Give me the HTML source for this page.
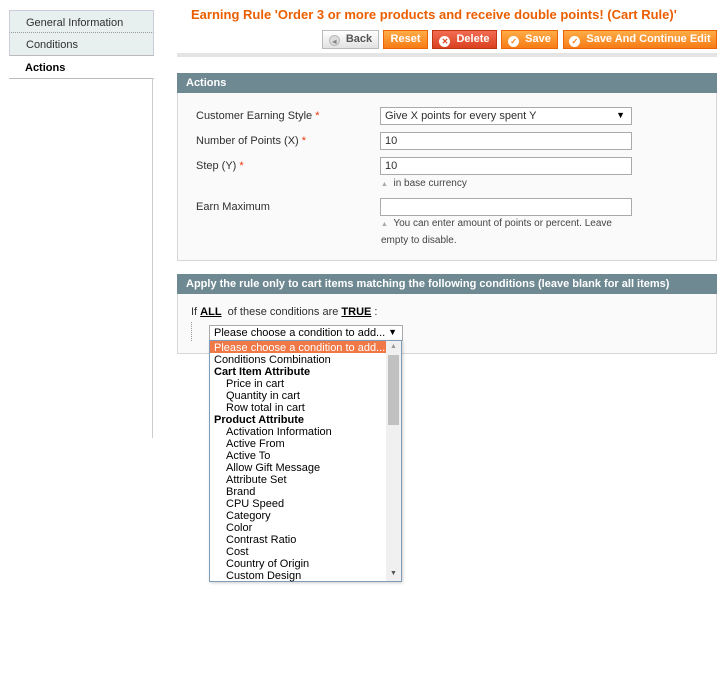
<!DOCTYPE html>
<html><head><style>
*{margin:0;padding:0;box-sizing:border-box}
body{width:725px;height:680px;background:#fff;font-family:"Liberation Sans",Arial,sans-serif;font-size:11px;color:#2f2f2f;position:relative;overflow:hidden}
.a{position:absolute}
.tab{position:absolute;left:9px;width:145px;height:23px;padding:6px 0 0 16px;font-size:11px}
.btn{position:absolute;top:30px;height:19px;border:1px solid #ed6502;background:linear-gradient(#ffac47,#f77c16);color:#fff;font-weight:bold;font-size:11px;line-height:17px;padding:0;white-space:nowrap;text-align:center;overflow:hidden}
.ic{display:inline-block;width:11px;height:11px;border-radius:50%;background:#fff;vertical-align:-2px;margin-right:6px;color:#f77c16;font-size:8px;line-height:11px;text-align:center}
.hd{position:absolute;left:177px;width:540px;height:20px;background:#6f8992;color:#fff;font-weight:bold;font-size:11px;padding:4px 0 0 9px}
.box{position:absolute;left:177px;width:540px;background:#fafafa;border:1px solid #d6d6d6;border-top:0}
.lbl{position:absolute;left:196px}
.req{color:#eb340a}
.inp{position:absolute;left:380px;width:252px;height:18px;border:1px solid #aaa;background:#fff;padding:2px 4px}
.note{position:absolute;left:381px;font-size:10px;color:#444;line-height:16px}
.li{position:absolute;left:214px;line-height:12px;white-space:nowrap}
</style></head><body>
<div class="tab" style="top:10px;background:#e7efef;border:1px solid #ccd;border-bottom:1px dotted #999">General Information</div>
<div class="tab" style="top:33px;background:#e7efef;border-left:1px solid #ccd;border-right:1px solid #ccd;border-bottom:1px solid #bbb">Conditions</div>
<div class="tab" style="top:56px;font-weight:bold;color:#000;border-bottom:1px solid #bbb;background:#fff">Actions</div>
<div class="a" style="left:152px;top:78px;width:1px;height:360px;background:#ccc"></div>

<div class="a" style="left:191px;top:7px;color:#eb5e00;font-weight:bold;font-size:13px">Earning Rule 'Order 3 or more products and receive double points! (Cart Rule)'</div>
<div class="btn" style="left:322px;width:57px;background:linear-gradient(#fff,#e2e2e2);border-color:#bbb;color:#555"><span class="ic" style="background:#ddd;color:#888;border:1px solid #bbb">◂</span>Back</div>
<div class="btn" style="left:383px;width:45px">Reset</div>
<div class="btn" style="left:432px;width:65px;background:linear-gradient(#f26c52,#d9411f);border-color:#bf3512"><span class="ic" style="color:#d9411f">✕</span>Delete</div>
<div class="btn" style="left:501px;width:57px"><span class="ic">✓</span>Save</div>
<div class="btn" style="left:563px;width:154px"><span class="ic">✓</span>Save And Continue Edit</div>
<div class="a" style="left:177px;top:53px;width:540px;height:4px;background:#e4e4e4"></div>

<div class="hd" style="top:73px">Actions</div>
<div class="box" style="top:93px;height:168px"></div>
<div class="lbl" style="top:110px">Customer Earning Style <span class="req">*</span></div>
<div class="inp" style="top:107px;height:18px;padding-left:4px">Give X points for every spent Y<span style="position:absolute;right:6px;font-size:9px;color:#000">▼</span></div>
<div class="lbl" style="top:135px">Number of Points (X) <span class="req">*</span></div>
<div class="inp" style="top:132px">10</div>
<div class="lbl" style="top:160px">Step (Y) <span class="req">*</span></div>
<div class="inp" style="top:157px">10</div>
<div class="note" style="top:176px"><span style="color:#aaa;font-size:7px">▲</span>&nbsp; in base currency</div>
<div class="lbl" style="top:201px">Earn Maximum</div>
<div class="inp" style="top:198px"></div>
<div class="note" style="top:216px;width:240px"><span style="color:#aaa;font-size:7px">▲</span>&nbsp; You can enter amount of points or percent. Leave empty to disable.</div>

<div class="hd" style="top:274px">Apply the rule only to cart items matching the following conditions (leave blank for all items)</div>
<div class="box" style="top:294px;height:60px"></div>
<div class="a" style="left:191px;top:306px">If <b style="text-decoration:underline;color:#000">ALL</b>&nbsp; of these conditions are <b style="text-decoration:underline;color:#000">TRUE</b> :</div>
<div class="a" style="left:191px;top:322px;height:19px;border-left:1px dotted #999"></div>
<div class="a" style="left:209px;top:325px;width:194px;height:16px;border:1px solid #aaa;background:#fff;padding:1px 4px;color:#000">Please choose a condition to add...<span style="position:absolute;right:5px;font-size:9px">▼</span></div>

<div class="a" style="left:209px;top:340px;width:193px;height:242px;border:1px solid #7f9db9;background:#fff;box-shadow:1px 1px 3px rgba(0,0,0,.2)"></div>
<div class="a" style="left:210px;top:341px;width:176px;height:12px;background:#f07746"></div>
<div class="a" style="left:386px;top:341px;width:15px;height:240px;background:#f0f0f0"></div>
<div class="a" style="left:388px;top:355px;width:11px;height:70px;background:#c1c1c1"></div>
<div class="a" style="left:390px;top:343px;font-size:7px;color:#999">▲</div>
<div class="a" style="left:390px;top:570px;font-size:7px;color:#555">▼</div>
<div class="li" style="top:342px;color:#fff">Please choose a condition to add...</div>
<div class="li" style="top:354px;color:#000">Conditions Combination</div>
<div class="li" style="top:366px;color:#000;font-weight:bold">Cart Item Attribute</div>
<div class="li" style="top:378px;left:226px;color:#000">Price in cart</div>
<div class="li" style="top:390px;left:226px;color:#000">Quantity in cart</div>
<div class="li" style="top:402px;left:226px;color:#000">Row total in cart</div>
<div class="li" style="top:414px;color:#000;font-weight:bold">Product Attribute</div>
<div class="li" style="top:426px;left:226px;color:#000">Activation Information</div>
<div class="li" style="top:438px;left:226px;color:#000">Active From</div>
<div class="li" style="top:450px;left:226px;color:#000">Active To</div>
<div class="li" style="top:462px;left:226px;color:#000">Allow Gift Message</div>
<div class="li" style="top:474px;left:226px;color:#000">Attribute Set</div>
<div class="li" style="top:486px;left:226px;color:#000">Brand</div>
<div class="li" style="top:498px;left:226px;color:#000">CPU Speed</div>
<div class="li" style="top:510px;left:226px;color:#000">Category</div>
<div class="li" style="top:522px;left:226px;color:#000">Color</div>
<div class="li" style="top:534px;left:226px;color:#000">Contrast Ratio</div>
<div class="li" style="top:546px;left:226px;color:#000">Cost</div>
<div class="li" style="top:558px;left:226px;color:#000">Country of Origin</div>
<div class="li" style="top:570px;left:226px;color:#000">Custom Design</div>
</body></html>
